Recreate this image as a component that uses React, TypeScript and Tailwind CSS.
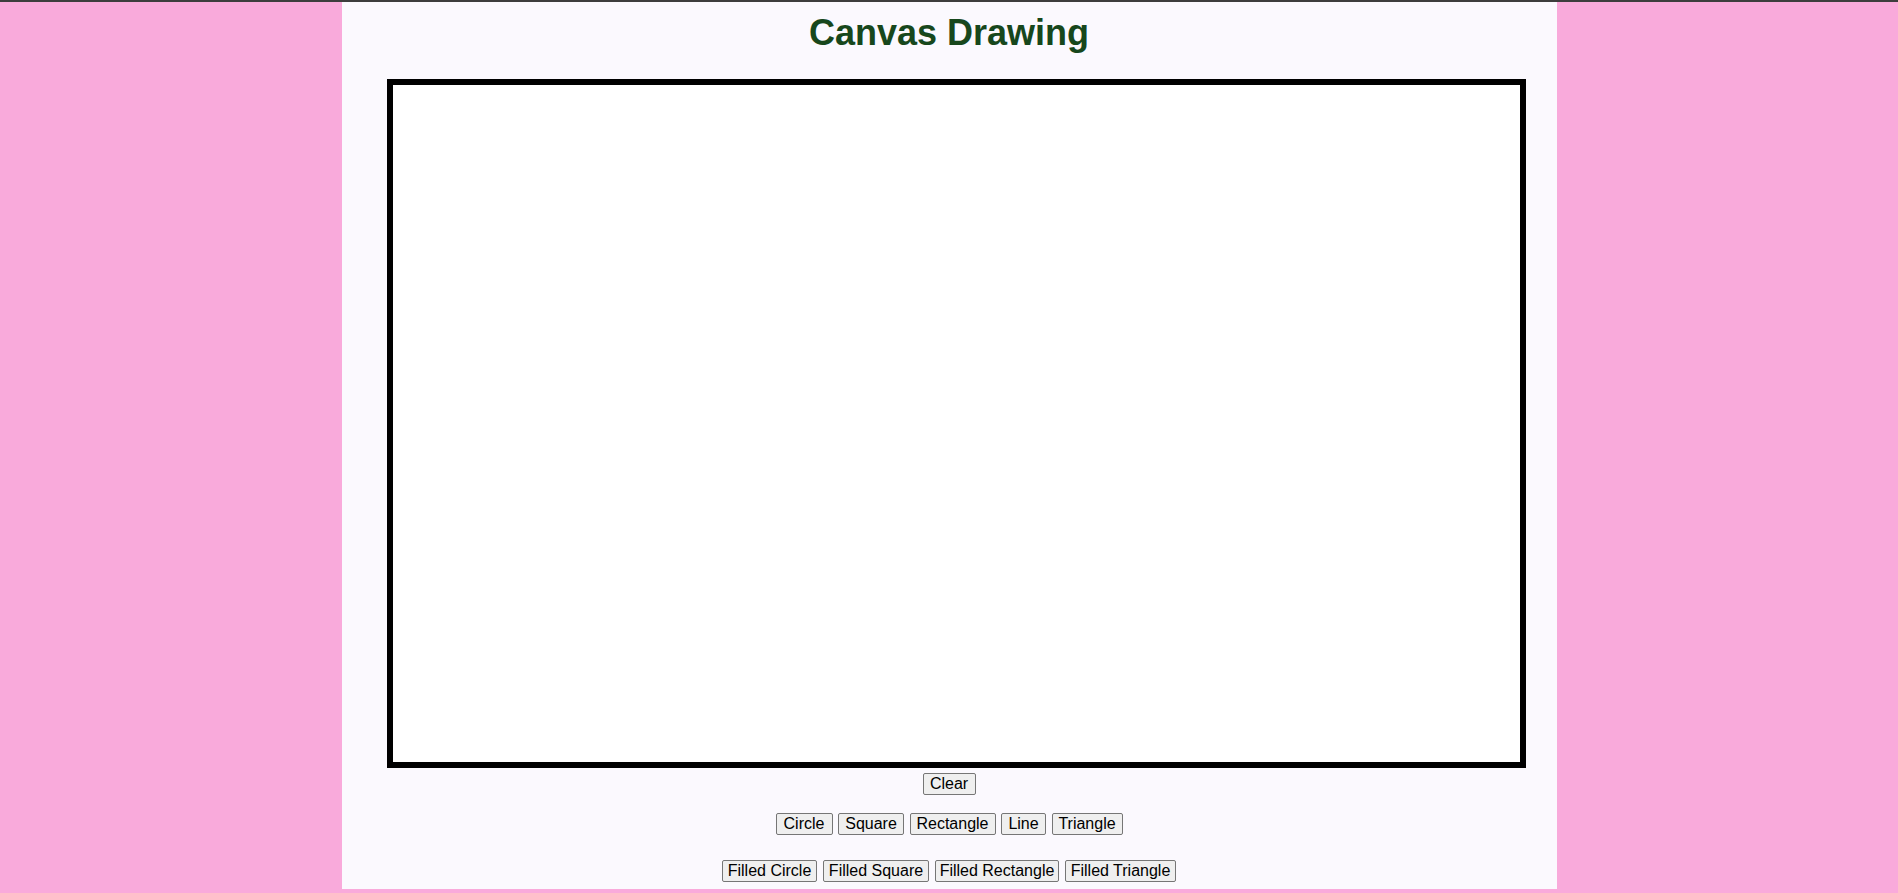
const outline = [
  { label: 'Circle', w: 'w-[57px]' },
  { label: 'Square', w: 'w-[66px]' },
  { label: 'Rectangle', w: 'w-[86px]' },
  { label: 'Line', w: 'w-[45px]' },
  { label: 'Triangle', w: 'w-[71px]' },
]
const filled = [
  { label: 'Filled Circle', w: 'w-[95px]' },
  { label: 'Filled Square', w: 'w-[106px]' },
  { label: 'Filled Rectangle', w: 'w-[124px]' },
  { label: 'Filled Triangle', w: 'w-[111px]' },
]

function ToolButton({ label, w }: { label: string; w: string }) {
  return (
    <button
      type="button"
      className={`${w} h-[22px] shrink-0 whitespace-nowrap rounded-[2px] border border-[#767676] bg-[#efefef] px-0 text-center text-[16px] leading-[18px] text-black hover:bg-[#e5e5e5]`}
    >
      {label}
    </button>
  )
}

export default function App() {
  return (
    <div className="min-h-[893px] border-t-2 border-[#3d3d3d] bg-[#f9aadb] pb-[4px] font-['Liberation_Sans',Arial,sans-serif]">
      <div className="mx-auto h-[887px] w-[1215px] bg-[#fbf9fe] pt-[11px]">
        <h1 className="h-[40px] text-center text-[36px] font-bold leading-[40px] text-[#17471c]">
          Canvas Drawing
        </h1>

        <div className="ml-[45px] mt-[26px] h-[689px] w-[1139px] border-[6px] border-black bg-white" />

        <div className="mt-[5px] flex justify-center">
          <ToolButton label="Clear" w="w-[53px]" />
        </div>

        <div className="mt-[18px] flex justify-center gap-[5.5px]">
          {outline.map((b) => (
            <ToolButton key={b.label} label={b.label} w={b.w} />
          ))}
        </div>

        <div className="mt-[25px] flex justify-center gap-[6px]">
          {filled.map((b) => (
            <ToolButton key={b.label} label={b.label} w={b.w} />
          ))}
        </div>
      </div>
    </div>
  )
}
